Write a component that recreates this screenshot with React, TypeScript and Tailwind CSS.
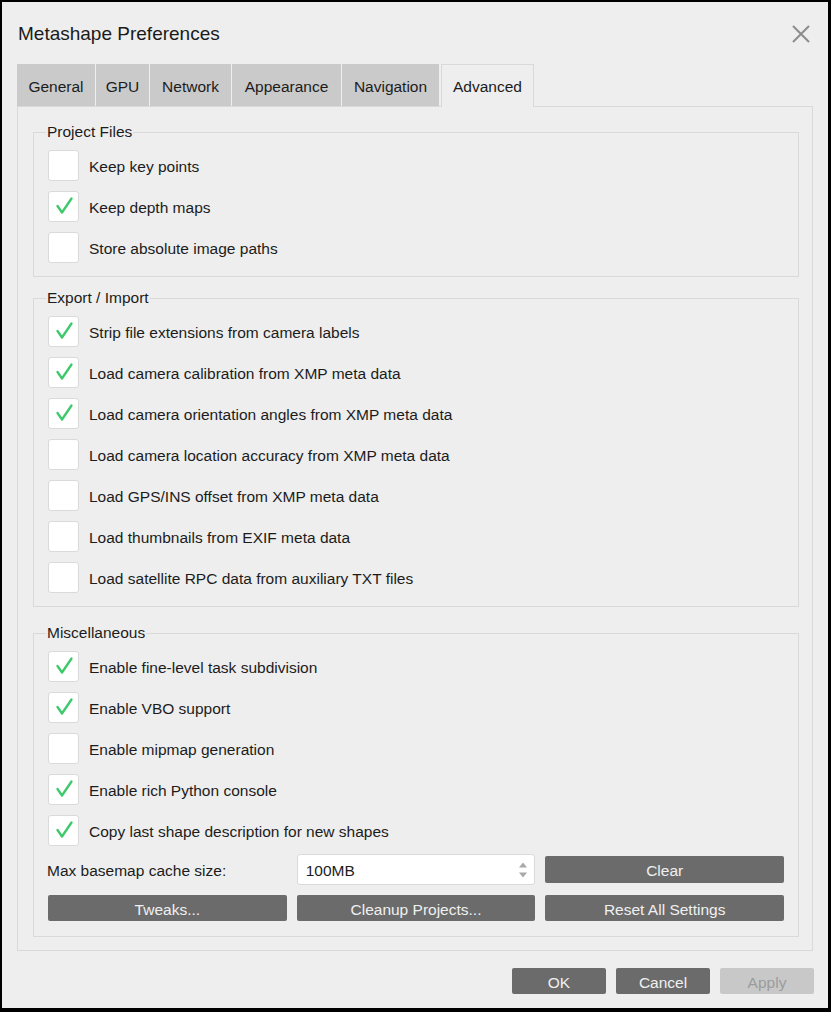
import React from 'react';

type CheckProps = { checked?: boolean; label: string };

const Check: React.FC<CheckProps> = ({ checked, label }) => (
  <div className="flex h-[41px] items-center">
    <div className="flex h-[31px] w-[31px] shrink-0 items-center justify-center rounded-[3px] border border-[#dadada] bg-white">
      {checked && (
        <svg width="29" height="29" viewBox="0 0 29 29">
          <path
            d="M8.5 14 L13 20.5 L22.5 6.5"
            fill="none"
            stroke="#3cc96a"
            strokeWidth="2.3"
            strokeLinecap="round"
            strokeLinejoin="round"
          />
        </svg>
      )}
    </div>
    <span className="ml-[10px] pt-[3px] text-[15.5px] text-[#1c1c1c]">{label}</span>
  </div>
);

type GroupProps = { title: string; className?: string; children: React.ReactNode };

const Group: React.FC<GroupProps> = ({ title, className, children }) => (
  <fieldset className={`border border-[#d9d9d9] ${className ?? ''}`}>
    <legend className="ml-[12px] px-[1px] text-[15.5px] leading-[20px] text-[#1c1c1c]">{title}</legend>
    {children}
  </fieldset>
);

const tabs = [
  { name: 'General', w: 'w-[78px]' },
  { name: 'GPU', w: 'w-[53px]' },
  { name: 'Network', w: 'w-[81px]' },
  { name: 'Appearance', w: 'w-[109px]' },
  { name: 'Navigation', w: 'w-[97px]' },
];

const GrayButton: React.FC<{ label: string; className?: string }> = ({ label, className }) => (
  <button
    className={`flex items-center justify-center rounded-[2px] bg-[#6b6b6b] pt-[3px] text-[15.5px] text-[#f0f0f0] ${className ?? ''}`}
  >
    {label}
  </button>
);

const App: React.FC = () => {
  return (
    <div className="h-[1012px] w-[831px] border-b-[4px] border-l-2 border-r-[3px] border-t-2 border-black bg-[#eeeeee] font-['Liberation_Sans',Arial,sans-serif]">
      {/* Title bar */}
      <div className="flex h-[62px] items-center justify-between pl-[16px] pr-[16px] pt-[2px]">
        <span className="text-[19px] text-[#1a1a1a]">Metashape Preferences</span>
        <svg width="22" height="22" viewBox="0 0 22 22">
          <path d="M3 3 L19 19 M19 3 L3 19" stroke="#8c8c8c" strokeWidth="2" />
        </svg>
      </div>

      {/* Tabs */}
      <div className="ml-[15px] flex h-[42px] items-end">
        {tabs.map((t) => (
          <div
            key={t.name}
            className={`mr-[1px] flex h-[42px] items-center justify-center bg-[#cacaca] pt-[3px] text-[15.5px] text-[#1c1c1c] ${t.w}`}
          >
            {t.name}
          </div>
        ))}
        <div className="relative z-10 -mb-[1px] ml-[1px] flex h-[43px] w-[93px] items-center justify-center border border-b-0 border-[#d9d9d9] bg-[#eeeeee] pt-[1px] text-[15.5px] text-[#1c1c1c]">
          Advanced
        </div>
      </div>

      {/* Tab pane */}
      <div className="ml-[15px] h-[845px] w-[796px] border border-[#d9d9d9] pl-[15px] pr-[13px] pt-[15px]">
        <Group title="Project Files">
          <div className="pb-[8px] pl-[14px] pt-[3px]">
            <Check label="Keep key points" />
            <Check checked label="Keep depth maps" />
            <Check label="Store absolute image paths" />
          </div>
        </Group>

        <Group title="Export / Import" className="mt-[11px]">
          <div className="pb-[8px] pl-[14px] pt-[3px]">
            <Check checked label="Strip file extensions from camera labels" />
            <Check checked label="Load camera calibration from XMP meta data" />
            <Check checked label="Load camera orientation angles from XMP meta data" />
            <Check label="Load camera location accuracy from XMP meta data" />
            <Check label="Load GPS/INS offset from XMP meta data" />
            <Check label="Load thumbnails from EXIF meta data" />
            <Check label="Load satellite RPC data from auxiliary TXT files" />
          </div>
        </Group>

        <Group title="Miscellaneous" className="mt-[16px]">
          <div className="pb-[15px] pl-[14px] pr-[14px] pt-[3px]">
            <Check checked label="Enable fine-level task subdivision" />
            <Check checked label="Enable VBO support" />
            <Check label="Enable mipmap generation" />
            <Check checked label="Enable rich Python console" />
            <Check checked label="Copy last shape description for new shapes" />

            <div className="mt-[3px] grid h-[31px] grid-cols-3 items-center gap-x-[10px]">
              <span className="-ml-[1px] pt-[3px] text-[15.5px] text-[#1c1c1c]">Max basemap cache size:</span>
              <div className="relative flex h-[31px] items-center rounded-[3px] border border-[#dadada] bg-white pl-[8px] pt-[3px] text-[15.5px] text-[#1c1c1c]">
                100MB
                <svg className="absolute right-[6px] top-[6px]" width="10" height="18" viewBox="0 0 10 18">
                  <path d="M1 6.5 L5 1.5 L9 6.5 Z" fill="#a8a8a8" />
                  <path d="M1 11.5 L5 16.5 L9 11.5 Z" fill="#a8a8a8" />
                </svg>
              </div>
              <GrayButton label="Clear" className="h-[27px]" />
            </div>

            <div className="mt-[10px] grid grid-cols-3 gap-x-[10px]">
              <GrayButton label="Tweaks..." className="h-[26px]" />
              <GrayButton label="Cleanup Projects..." className="h-[26px]" />
              <GrayButton label="Reset All Settings" className="h-[26px]" />
            </div>
          </div>
        </Group>
      </div>

      {/* Footer buttons */}
      <div className="mt-[17px] flex justify-end gap-[10px] pr-[14px]">
        <GrayButton label="OK" className="h-[26px] w-[94px]" />
        <GrayButton label="Cancel" className="h-[26px] w-[94px]" />
        <button className="flex h-[26px] w-[94px] items-center justify-center rounded-[2px] bg-[#c8c8c8] pt-[3px] text-[15.5px] text-[#9c9c9c]">
          Apply
        </button>
      </div>
    </div>
  );
};

export default App;
